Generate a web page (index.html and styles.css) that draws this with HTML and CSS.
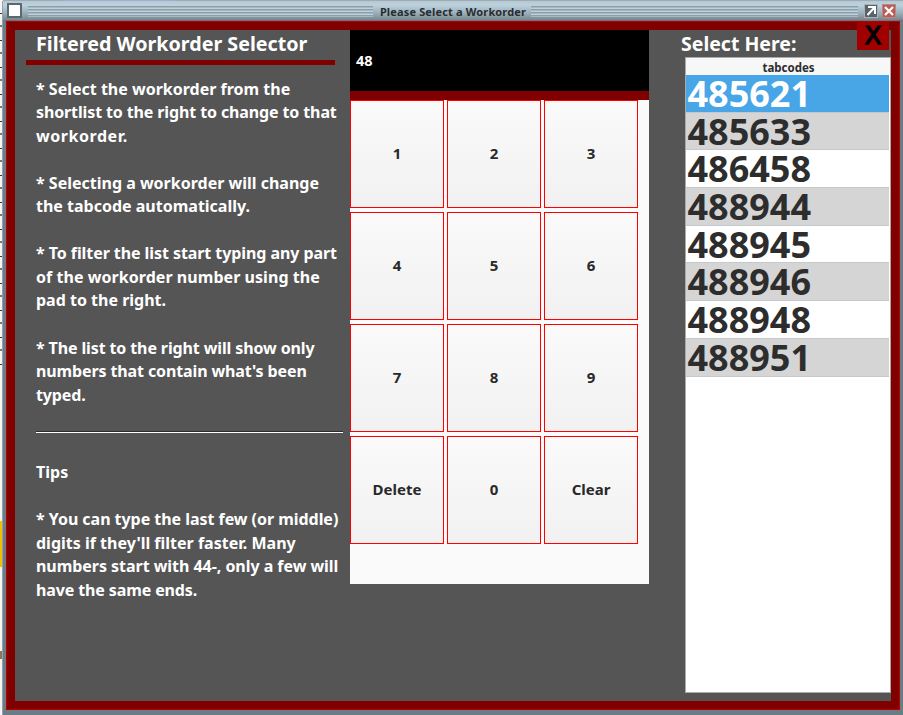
FILE: index.html
```html
<!DOCTYPE html>
<html lang="en">
<head>
<meta charset="utf-8">
<title>Please Select a Workorder</title>
<link rel="stylesheet" href="styles.css">
</head>
<body>
<div class="window">
  <header class="titlebar">
    <span class="win-menu"></span>
    <span class="grip"></span>
    <span class="win-title">Please Select a Workorder</span>
    <span class="grip grip-right"></span>
    <svg class="win-btn" viewBox="0 0 14 14"><rect x=".5" y=".5" width="13" height="13" fill="#596367" stroke="#a5b4bc"/><path d="M4 3h7v7M10 4l-6.500 7" fill="none" stroke="#fff" stroke-width="2"/></svg>
    <svg class="win-btn" viewBox="0 0 14 14"><rect x=".5" y=".5" width="13" height="13" fill="#c05a50" stroke="#a98c8c"/><path d="m3 3 8 8M11 3l-8 8" stroke="#fff" stroke-width="2.2"/></svg>
  </header>
  <main class="content">
    <section class="help">
      <h1>Filtered Workorder Selector</h1>
      <div class="rule"></div>
      <div class="copy">
        <p>* Select the workorder from the<br><span class="tight">shortlist to the right to change to that</span><br><span class="wide">workorder.</span></p>
        <p>* Selecting a workorder will change<br>the tabcode automatically.</p>
        <p><span class="snug">* To filter the list start typing any part</span><br><span class="loose">of the workorder number using the</span><br>pad to the right.</p>
        <p class="tight">* The list to the right will show only<br>numbers that contain what's been<br>typed.</p>
      </div>
      <hr>
      <div class="copy tips">
        <p>Tips</p>
        <p><span class="loose-end">* You can type the last few (or middle)</span><br>digits if they'll filter faster. Many<br><span class="loose-end">numbers start with 44-, only a few will</span><br><span class="tight">have the same ends.</span></p>
      </div>
    </section>
    <section class="pad">
      <div class="display">48</div>
      <div class="keys">
        <button>1</button><button>2</button><button>3</button>
        <button>4</button><button>5</button><button>6</button>
        <button>7</button><button>8</button><button>9</button>
        <button>Delete</button><button>0</button><button>Clear</button>
      </div>
    </section>
    <section class="picker">
      <h2>Select Here:</h2>
      <div class="list">
        <div class="list-head">tabcodes</div>
        <div class="row selected">485621</div>
        <div class="row">485633</div>
        <div class="row">486458</div>
        <div class="row">488944</div>
        <div class="row">488945</div>
        <div class="row">488946</div>
        <div class="row">488948</div>
        <div class="row">488951</div>
      </div>
    </section>
    <button class="close">X</button>
  </main>
</div>
</body>
</html>
```
FILE: styles.css
```css
* { box-sizing: border-box; }
body {
  margin: 0;
  width: 903px;
  height: 715px;
  overflow: hidden;
  padding: 1px 0 0 2px;
  background:
    linear-gradient(#f5bd00, #f5bd00) 0 521px / 2px 46px no-repeat,
    linear-gradient(#8c7558, #8c7558) 0 651px / 2px 8px no-repeat,
    linear-gradient(#a4acd0, #a4acd0) 62px 0 / 112px 1px no-repeat,
    linear-gradient(#a3abb0, #a3abb0) 3px 0 / 900px 1px no-repeat,
    repeating-linear-gradient(#f4f4f2 0 13px, #333 13px 14px, #f4f4f2 14px 25px, #777 25px 27px) 0 0 / 2px 370px no-repeat,
    #f4f4f2;
  font-family: "Noto Sans", sans-serif;
  font-weight: 700;
  color: #fff;
}
.window {
  width: 901px;
  height: 714px;
  padding: 0 3px 4px;
  background: #6d7c84;
  border-left: 1px solid #93a1a8;
}
.titlebar {
  height: 20px;
  margin: 0 -3px;
  padding: 2px 3px 0 4px;
  display: flex;
  align-items: flex-start;
  background: linear-gradient(#b4c9d4 0, #bcd2de 4px, #9cafb9 12px, #76868e 19px, #59666c 20px);
}
.win-menu {
  width: 15px;
  height: 15px;
  border: 2px solid #596970;
  background: #fff;
}
.grip {
  width: 345px;
  height: 12px;
  margin: 2px 0 0 6px;
  background: repeating-linear-gradient(#bdd1db 0 1px, #8c9fa9 1px 2px, #a5b9c4 2px 3px);
}
.grip-right { width: 327px; margin: 2px 6px 0 0; }
.win-title {
  width: 158px;
  padding-left: 2px;
  text-align: center;
  font-size: 11px;
  letter-spacing: .15px;
  line-height: 15px;
  margin-top: 1px;
  color: #272d30;
  white-space: nowrap;
}
.win-btn { width: 14px; height: 14px; margin: 1px 4px 0 0; flex: none; }
.content {
  position: relative;
  height: 689px;
  display: flex;
  background: #555;
  border: 9px solid #800000;
  outline: 1px solid #b40000;
  outline-offset: -1px;
}
.help { width: 335px; padding-left: 11px; flex: none; }
h1, h2 { margin: 0; font-size: 19.7px; line-height: 28px; white-space: nowrap; }
h1 { padding-left: 10px; }
h2 { font-size: 19.5px; }
.rule { width: 309px; height: 5px; margin-top: 2px; background: #800000; }
.copy {
  padding: 12.5px 0 0 10px;
  font-size: 16px;
  line-height: 23.55px;
  white-space: nowrap;
}
.copy p { margin: 0 0 23.55px; }
.tight { letter-spacing: -.12px; }
.snug { letter-spacing: -.07px; }
.loose { letter-spacing: .05px; }
.loose-end { letter-spacing: -.04px; }
.wide { letter-spacing: .55px; }
hr { width: 307px; margin: 3px 0 0 10px; border: 0; border-top: 1px solid #2c2c2c; border-bottom: 1px solid #fff; }
.tips { padding-top: 28.5px; }
.pad { width: 299px; height: 554px; background: #fafafa; flex: none; }
.display {
  height: 70px;
  padding-left: 6px;
  background: #000;
  border-bottom: 9px solid #800000;
  font-size: 14.5px;
  line-height: 61px;
}
.keys {
  display: grid;
  grid-template-columns: repeat(3, 94px);
  grid-auto-rows: 108px;
  gap: 4px 3px;
}
.keys button {
  border: 1px solid #f00;
  background: linear-gradient(#fafafa, #f1f1f1);
  font: 700 15px "Noto Sans", sans-serif;
  color: #292929;
  padding: 0 0 3px;
}
.picker { padding-left: 32px; flex: none; }
.list {
  width: 206px;
  height: 636px;
  margin: -1px 0 0 4px;
  background: #fff;
  border: 1px solid #aaa;
  color: #2d2d2d;
}
.list-head { height: 17px; padding-left: 1px; font-size: 11.5px; line-height: 19px; text-align: center; background: #f7f7f7; }
.row {
  height: 37.7px;
  margin-right: 1px;
  padding-left: 1.5px;
  border-bottom: 1px solid #c5c9cc;
  font-size: 36px;
  line-height: 37px;
}
.row:nth-child(odd) { background: #d5d5d5; }
.row.selected { background: #48a5e6; color: #fff; }
.close {
  position: absolute;
  right: 2px;
  top: -8px;
  width: 32px;
  height: 28px;
  padding: 0;
  border: 0;
  background: #a00000;
  color: #000;
  font: 25px/28px "DejaVu Sans", sans-serif;
  -webkit-text-stroke: 1.3px #000;
}
```
